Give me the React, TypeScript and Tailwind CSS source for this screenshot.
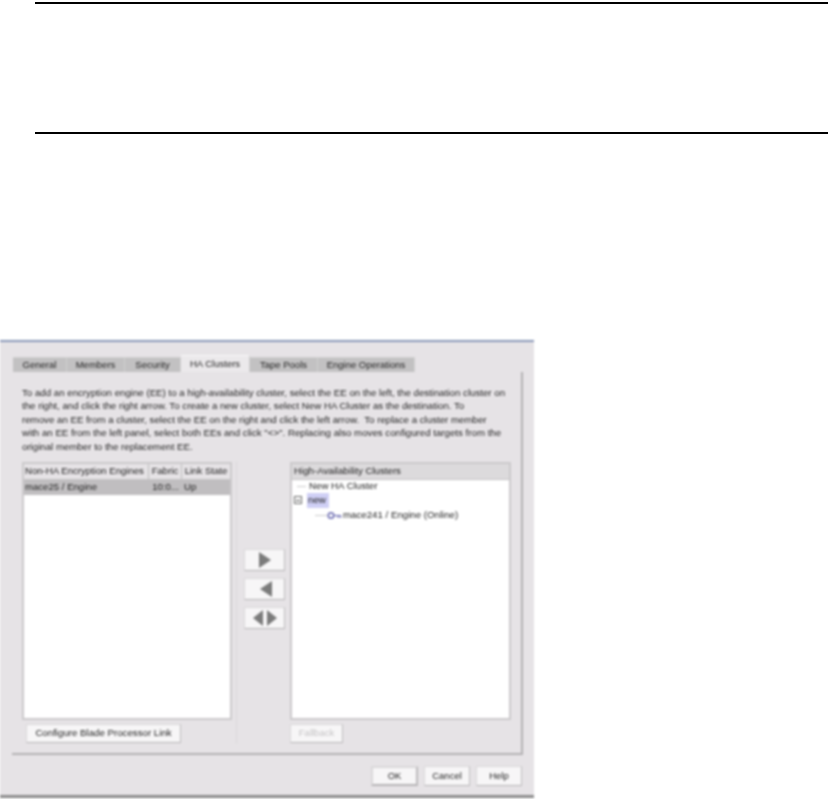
import { ReactNode } from "react";

const tabs = ["General", "Members", "Security", "HA Clusters", "Tape Pools", "Engine Operations"];
const tabWidths = ["w-[54px]", "w-[58px]", "w-[56px]", "w-[69px]", "w-[68px]", "w-[97px]"];

const helpLines = [
  "To add an encryption engine (EE) to a high-availability cluster, select the EE on the left, the destination cluster on",
  "the right, and click the right arrow. To create a new cluster, select New HA Cluster as the destination. To",
  "remove an EE from a cluster, select the EE on the right and click the left arrow.  To replace a cluster member",
  'with an EE from the left panel, select both EEs and click "<>". Replacing also moves configured targets from the',
  "original member to the replacement EE.",
];

const Raised = ({ className, children }: { className: string; children: ReactNode }) => (
  <div className={`flex items-center justify-center bg-[#f7f6f7] border border-[#dad8da] border-b-[#b5b3b5] border-r-[#bdbbbd] ${className}`}>
    {children}
  </div>
);

const Arrow = ({ dir }: { dir: "left" | "right" | "both" }) => (
  <svg width="30" height="20" viewBox="0 0 30 20" className="fill-[#7b7b7b]">
    {dir !== "left" && <path d={dir === "right" ? "M9 2 L21 10 L9 18 Z" : "M17 2 L27 10 L17 18 Z"} />}
    {dir !== "right" && <path d={dir === "left" ? "M22 2 L10 10 L22 18 Z" : "M13 2 L3 10 L13 18 Z"} />}
  </svg>
);

const App = () => {
  return (
    <div className="w-[828px] h-[799px] bg-white overflow-hidden font-['Liberation_Sans',Arial,sans-serif]">
      <div className="ml-[35px] mt-[2px] h-[128px] border-y-2 border-black box-content -mb-[2px]" />

      <div className="mt-[208px] w-[534px] h-[458px] bg-[#e6e3e6] border-t-2 border-t-[#8a98b8] border-b-[3px] border-b-[#8d8d8d] pt-[13px] blur-[0.8px]">
        <div className="flex pl-[13px] h-[17px] items-end">
          {tabs.map((tab, i) => (
            <div
              key={tab}
              className={`${tabWidths[i]} flex items-center justify-center text-[9.5px] text-[#222] border-t border-r border-[#d0d0d0] ${
                tab === "HA Clusters" ? "h-[17px] bg-[#ebe9eb] border-t-[#f8f8f8]" : "h-[15px] bg-[#c2c1c2]"
              }`}
            >
              {tab}
            </div>
          ))}
        </div>

        <div className="ml-[12px] w-[511px] h-[383px] border-r-2 border-b-2 border-[#b3b1b3] pt-[14px] px-[10px]">
          <div className="text-[9.7px] leading-[13.4px] text-[#1f1f1f] whitespace-pre">
            {helpLines.map((line) => (
              <div key={line}>{line}</div>
            ))}
          </div>

          <div className="flex mt-[9px]">
            <div className="w-[210px] flex flex-col">
              <div className="h-[258px] bg-white border-2 border-[#cbc9cb]">
                <div className="flex h-[16px] bg-[#e6e3e6] text-[9.6px] text-[#222] border-b border-[#c4c2c4]">
                  <div className="w-[125px] pl-[1px] flex items-center border-r border-[#bbb] whitespace-nowrap">Non-HA Encryption Engines</div>
                  <div className="w-[33px] flex items-center justify-center border-r border-[#bbb]">Fabric</div>
                  <div className="flex-1 flex items-center justify-center whitespace-nowrap">Link State</div>
                </div>
                <div className="flex h-[15px] bg-[#c0bec0] text-[9.6px] text-[#222] items-center">
                  <div className="w-[125px] pl-[1px]">mace25 / Engine</div>
                  <div className="w-[33px] text-center">10:0...</div>
                  <div className="flex-1 pl-[2px]">Up</div>
                </div>
              </div>
              <Raised className="ml-[4px] mt-[4px] w-[155px] h-[19px] text-[9.7px] text-[#222]">Configure Blade Processor Link</Raised>
            </div>

            <div className="ml-[4px] w-[1px] border-l border-dotted border-[#d0ced0]" />

            <div className="ml-[7px] w-[41px] flex flex-col gap-[7px] pt-[87px]">
              <Raised className="h-[22px]"><Arrow dir="right" /></Raised>
              <Raised className="h-[22px]"><Arrow dir="left" /></Raised>
              <Raised className="h-[22px]"><Arrow dir="both" /></Raised>
            </div>

            <div className="ml-[5px] w-[221px] flex flex-col">
              <div className="h-[258px] bg-white border-2 border-[#cbc9cb]">
                <div className="h-[16px] bg-[#dcdadc] border-b border-[#c4c2c4] pl-[2px] flex items-center text-[9.7px] text-[#222]">High-Availability Clusters</div>
                <div className="text-[9.7px] text-[#222]">
                  <div className="flex items-center h-[12px]">
                    <span className="ml-[5px] w-[9px] h-[1px] bg-[#ccc]" />
                    <span className="ml-[3px]">New HA Cluster</span>
                  </div>
                  <div className="flex items-center h-[16px]">
                    <span className="ml-[2px] flex items-center justify-center w-[8px] h-[8px] border border-[#666]">
                      <span className="w-[4px] h-[1px] bg-[#444]" />
                    </span>
                    <span className="ml-[5px] px-[1px] w-[22px] bg-[#cfcff5] h-[15px] flex items-center">new</span>
                  </div>
                  <div className="flex items-center h-[14px]">
                    <span className="ml-[23px] w-[12px] h-[1px] bg-[#ccc]" />
                    <svg width="15" height="9" viewBox="0 0 15 9" className="stroke-[#6a6ab0] fill-none">
                      <circle cx="4" cy="4.5" r="2.8" strokeWidth="1.5" />
                      <path d="M7 4.5H14M11 4.5V7M13.5 4.5V7" strokeWidth="1.2" />
                    </svg>
                    <span className="ml-[1px]">mace241 / Engine (Online)</span>
                  </div>
                </div>
              </div>
              <Raised className="mt-[4px] w-[53px] h-[19px] text-[9.5px] text-[#c4c2c4]">Fallback</Raised>
            </div>
          </div>
        </div>

        <div className="flex justify-end gap-[6px] pr-[12px] mt-[11px] text-[9.5px] text-[#222]">
          <Raised className="w-[47px] h-[20px] border-2 border-[#bdbbbd]">OK</Raised>
          <Raised className="w-[46px] h-[20px]">Cancel</Raised>
          <Raised className="w-[46px] h-[20px]">Help</Raised>
        </div>
      </div>
    </div>
  );
};

export default App;
